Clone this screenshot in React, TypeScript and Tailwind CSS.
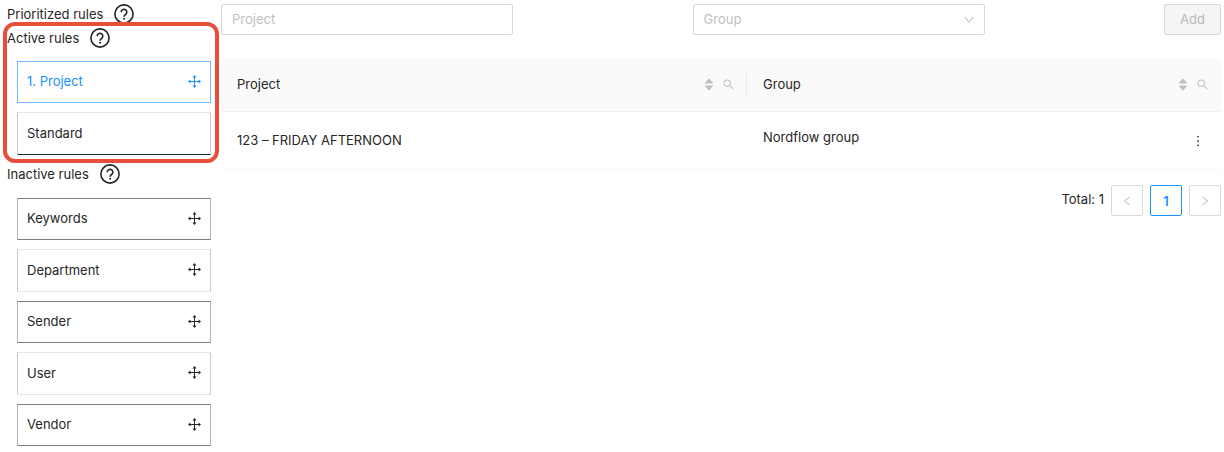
import { useState } from "react";
import {
    AiFillCaretDown,
    AiFillCaretUp,
    AiOutlineDown,
    AiOutlineLeft,
    AiOutlineMore,
    AiOutlineRight,
    AiOutlineSearch,
} from "react-icons/ai";

const inactiveRules = ["Keywords", "Department", "Sender", "User", "Vendor"];

const HelpIcon = () => (
    <svg width="20" height="20" viewBox="0 0 20 20" fill="none" stroke="currentColor" strokeWidth="1.6" aria-hidden="true">
        <circle cx="10" cy="10" r="9.1" />
        <path d="M7.2 8.2a2.8 2.8 0 1 1 4.7 2c-1 .8-1.8 1.2-1.8 2.6" />
        <circle cx="10.1" cy="14.7" r="1" fill="currentColor" stroke="none" />
    </svg>
);

const MoveIcon = () => (
    <svg width="13" height="13" viewBox="0 0 13 13" fill="currentColor" aria-hidden="true">
        <path d="M6 1.5h1V6h4.5v1H7v4.5H6V7H1.5V6H6z" />
        <path d="M6.5 0l2 2.4h-4zM6.5 13l2-2.4h-4zM0 6.5l2.4-2v4zM13 6.5l-2.4-2v4z" />
    </svg>
);

const SectionTitle = ({ title }: { title: string }) => (
    <div className="flex h-6 items-center gap-[11px]">
        <h2>{title}</h2>
        <button type="button" aria-label={`Help: ${title}`}>
            <HelpIcon />
        </button>
    </div>
);

type RuleProps = {
    label: string;
    className: string;
    draggable?: boolean;
};

const Rule = ({ label, className, draggable = true }: RuleProps) => (
    <li>
        <button type="button" className={`flex w-full items-center justify-between border px-[9px] pb-0.5 ${className}`}>
            <span>{label}</span>
            {draggable && <MoveIcon />}
        </button>
    </li>
);

const HeaderCell = ({ title }: { title: string }) => (
    <div className="flex items-center justify-between">
        <span className="pb-0.5">{title}</span>
        <span className="flex items-center gap-[7px] text-[#bfbfbf]">
            <button type="button" aria-label={`Sort by ${title}`} className="flex flex-col items-center">
                <AiFillCaretUp size={12} className="-mb-[5px]" />
                <AiFillCaretDown size={12} />
            </button>
            <button type="button" aria-label={`Search ${title}`}>
                <AiOutlineSearch size={13} />
            </button>
        </span>
    </div>
);

const Sidebar = () => (
    <aside className="w-[204px] shrink-0 pt-0.5">
        <SectionTitle title="Prioritized rules" />
        <section className="relative">
            <SectionTitle title="Active rules" />
            <ul className="mt-[11px] ml-2.5 flex flex-col gap-[9px]">
                <Rule label="1. Project" className="h-[42px] border-[#74bcff] text-[#1890ff]" />
                <Rule label="Standard" draggable={false} className="h-[43px] border-[#e6e6e6] border-x-[#c8c8c8] border-b-[#262626]" />
            </ul>
            {/* highlight around the active rules */}
            <div className="pointer-events-none absolute -top-1 -right-2 -bottom-2 -left-1 rounded-xl border-4 border-[#e64f3c]" />
        </section>
        <section className="mt-[7px]">
            <SectionTitle title="Inactive rules" />
            <ul className="mt-3 ml-2.5 flex flex-col gap-[9px]">
                {inactiveRules.map((rule, i) => (
                    <Rule
                        key={rule}
                        label={rule}
                        className={i % 2 ? "h-[43px] border-[#e6e6e6] border-x-[#c8c8c8]" : "h-[42px] border-x-[#b4b4b4] border-y-[#808080]"}
                    />
                ))}
            </ul>
        </section>
    </aside>
);

const App = () => {
    const [project, setProject] = useState("");
    const [group, setGroup] = useState("");

    return (
        <div className="flex gap-2.5 bg-white pr-[3px] pl-[7px] font-['Inter',sans-serif] text-[13px] leading-5 text-[#262626]">
            <Sidebar />
            <main className="min-w-0 flex-1 pt-1">
                <form className="grid grid-cols-[1fr_1fr_auto]">
                    <input
                        type="text"
                        aria-label="Project"
                        placeholder="Project"
                        value={project}
                        onChange={(e) => setProject(e.target.value)}
                        className="h-[31px] w-[62%] rounded-xs border border-[#d9d9d9] px-2.5 pb-0.5 placeholder:text-[#bfbfbf]"
                    />
                    <div className="relative w-[62%]">
                        <select
                            aria-label="Group"
                            value={group}
                            onChange={(e) => setGroup(e.target.value)}
                            className="h-[31px] w-full appearance-none rounded-xs border border-[#d9d9d9] px-2.5 pb-0.5 text-[#bfbfbf]"
                        >
                            <option value="">Group</option>
                            <option value="nordflow">Nordflow group</option>
                        </select>
                        <AiOutlineDown size={12} className="pointer-events-none absolute top-2.5 right-2.5 text-[#bfbfbf]" />
                    </div>
                    <button type="button" disabled className="h-[31px] rounded-xs border border-[#d9d9d9] bg-[#f5f5f5] px-[15px] pb-0.5 text-[#b8b8b8]">
                        Add
                    </button>
                </form>

                <table className="mt-[23px] w-full table-fixed border-separate border-spacing-0 text-left">
                    <thead>
                        <tr className="h-[54px] bg-[#fafafa]">
                            <th className="w-[52.6%] border-b border-[#f0f0f0] py-0 pl-4 font-normal">
                                <div className="border-r border-[#e8e8e8] pr-[11px]">
                                    <HeaderCell title="Project" />
                                </div>
                            </th>
                            <th colSpan={2} className="border-b border-[#f0f0f0] py-0 pr-3 pl-4 font-normal">
                                <HeaderCell title="Group" />
                            </th>
                        </tr>
                    </thead>
                    <tbody>
                        <tr className="h-[58px]">
                            <td className="border-b border-[#f7f7f7] px-4 pb-0.5">123 – FRIDAY AFTERNOON</td>
                            <td className="border-b border-[#f7f7f7] px-4 pb-[7px]">Nordflow group</td>
                            <td className="border-b border-[#f7f7f7] pr-[15px] pb-0.5 text-right">
                                <button type="button" aria-label="More actions" className="align-middle">
                                    <AiOutlineMore size={16} />
                                </button>
                            </td>
                        </tr>
                    </tbody>
                </table>

                <nav aria-label="Pagination" className="mt-[15px] flex justify-end gap-[7px]">
                    <span className="pt-1">Total: 1</span>
                    <button type="button" disabled aria-label="Previous page" className="flex h-[31px] w-8 items-center justify-center rounded-xs border border-[#d9d9d9] text-[#bfbfbf]">
                        <AiOutlineLeft size={12} />
                    </button>
                    <button type="button" aria-current="page" className="h-[31px] w-8 rounded-xs border border-[#1890ff] font-semibold text-[#1890ff]">
                        1
                    </button>
                    <button type="button" disabled aria-label="Next page" className="flex h-[31px] w-8 items-center justify-center rounded-xs border border-[#d9d9d9] text-[#bfbfbf]">
                        <AiOutlineRight size={12} />
                    </button>
                </nav>
            </main>
        </div>
    );
};

export default App;
